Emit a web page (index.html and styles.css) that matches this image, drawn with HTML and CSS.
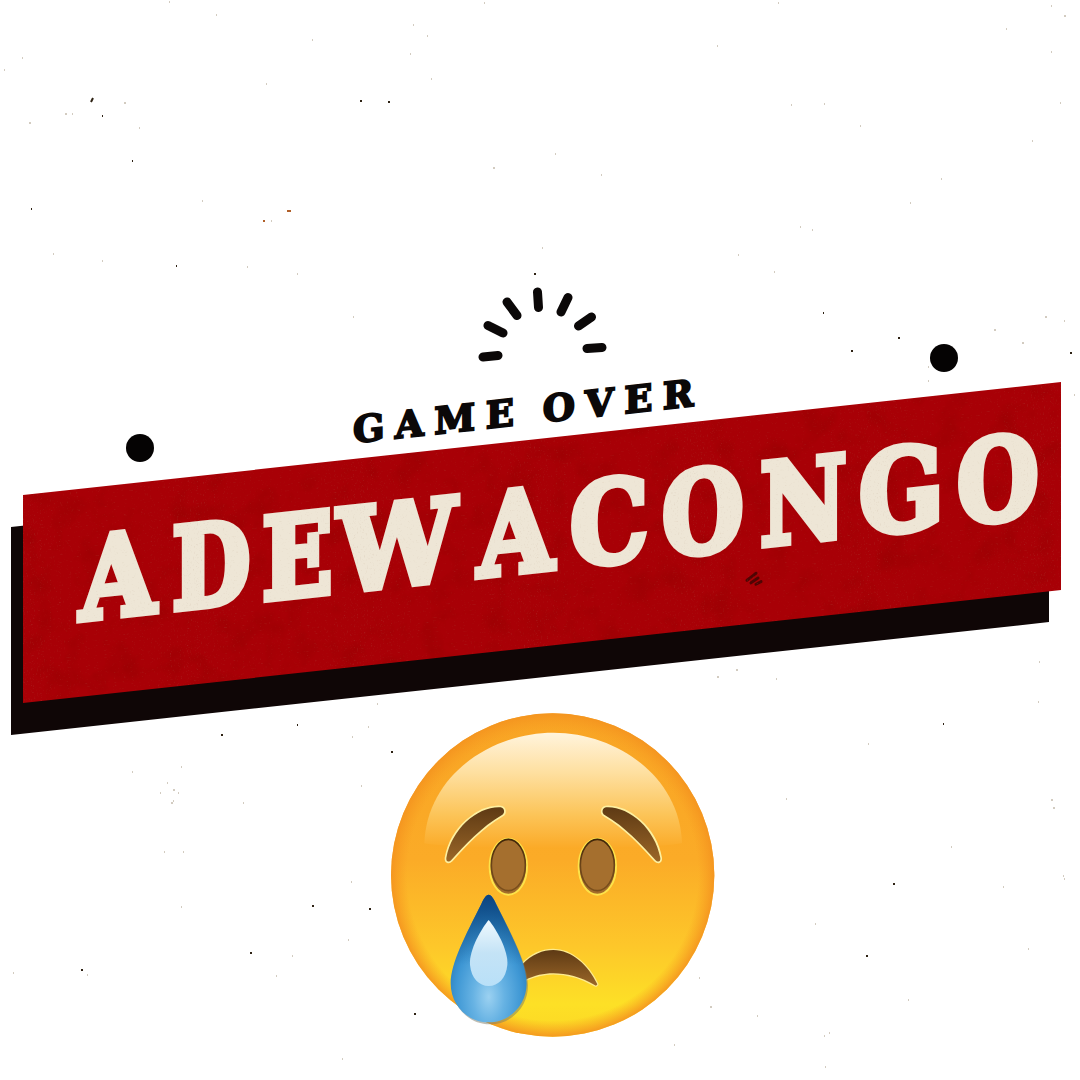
FILE: index.html
```html
<!DOCTYPE html>
<html lang="en">
<head>
<meta charset="utf-8">
<title>Game Over</title>
<link rel="stylesheet" href="styles.css">
</head>
<body>
<main class="canvas">
  <svg class="layer" viewBox="0 0 1080 1080" aria-hidden="true">
    <path class="speck" d="M169 2h1M216 15h1M413 25h1M427 36h1M410 54h1M312 40h1M484 3h1M22 58h1M4 70h1M266 84h1M431 79h1M124 103h2M65 114h2M72 114h1M29 123h2M139 128h1M202 201h1M271 221h1M53 254h1M102 261h1M247 267h1M297 274h1M493 168h2M778 3h1M1051 6h1M1064 16h2M1006 29h1M717 46h1M1051 52h1M791 105h1M824 104h1M1060 103h1M860 126h1M1032 141h1M555 154h1M601 175h1M941 179h1M910 203h1M800 227h1M812 230h1M542 248h1M738 255h1M774 272h1M1045 317h2M1064 321h1M994 330h2M1022 343h2M928 367h1M928 381h1M1074 395h1M353 317h1M377 704h1M368 727h1M352 737h1M181 767h1M132 772h1M167 783h1M173 790h2M160 793h1M178 793h1M173 801h1M171 803h2M243 803h1M361 786h1M164 852h1M183 852h1M181 907h1M351 882h1M348 940h1M292 956h1M276 976h1M87 975h1M13 973h1M342 1059h1M736 670h2M717 677h2M776 679h1M1039 662h1M1038 702h1M868 744h1M786 799h1M1051 800h2M1053 808h2M951 847h1M1003 887h1M1063 876h1M1064 879h1M815 924h1M1028 949h1M908 1000h1M710 1007h1M757 1016h1M829 1033h1M824 1036h1M825 1067h1M699 978h1M711 1007h1M674 1045h1"/>
    <path class="speck speck-dark" d="M93 98 91 102M360 101h2M388 102h2M102 116h1M132 161h1M31 209h1M176 266h1M534 274h2M823 313h1M898 338h2M851 351h2M1070 353h2M297 725h1M221 735h2M391 752h2M312 906h2M369 909h2M250 953h2M81 970h2M943 724h1M893 884h2M866 956h2M414 1014h2"/>
    <path class="speck speck-rust" d="M287 211h4M263 221h2"/>
  </svg>

  <span class="dot dot-left"></span>
  <span class="dot dot-right"></span>

  <svg class="layer rays" viewBox="0 0 1080 1080" aria-hidden="true">
    <path d="M483 357 498 355.500M488 325.500 503 333M507 302 517 315.500M537.500 292 538.500 307.500M568 297.500 561 312M591.500 317 578.500 326M602 347.500 587 348.500"/>
  </svg>

  <p class="kicker">GAME OVER</p>

  <div class="banner-shadow"></div>
  <section class="banner">
    <svg class="grain" viewBox="0 0 1038 208" preserveAspectRatio="none" aria-hidden="true">
      <defs>
        <filter id="mottle" x="0" y="0" width="100%" height="100%">
          <feTurbulence type="fractalNoise" baseFrequency=".035" numOctaves="4" seed="7"/>
          <feColorMatrix values="0 0 0 0 .28  0 0 0 0 0  0 0 0 0 0  0 0 0 2.600 -1.300"/>
        </filter>
      </defs>
      <rect class="grain-mottle" width="1038" height="208" filter="url(#mottle)"/>
      <path class="scratch" d="M724 164 730 160 733 158M728 167 735 163M733 169 738 167"/>
    </svg>
    <h1 class="name"><span class="g-a">A</span><span class="g-d">D</span><span class="g-e">E</span><span class="g-w">W</span><span class="g-a">A</span><span class="g-c">C</span><span class="g-o">O</span><span class="g-n">N</span><span class="g-g">G</span><span class="g-o">O</span></h1>
    <svg class="grain" viewBox="0 0 1038 208" preserveAspectRatio="none" aria-hidden="true">
      <defs>
        <filter id="fine" x="0" y="0" width="100%" height="100%">
          <feTurbulence type="fractalNoise" baseFrequency=".7" numOctaves="2" seed="3"/>
          <feColorMatrix values="0 0 0 0 .45  0 0 0 0 .3  0 0 0 0 .2  0 0 0 3 -1.700"/>
        </filter>
      </defs>
      <rect class="grain-fine" width="1038" height="208" filter="url(#fine)"/>
    </svg>
  </section>

  <svg class="emoji" viewBox="0 0 1050 1050" role="img" aria-label="Crying face">
    <defs>
      <linearGradient id="face" x1="0" y1="0" x2="0" y2="1">
        <stop offset="0" stop-color="#f8a424"/>
        <stop offset=".45" stop-color="#fbab27"/>
        <stop offset=".72" stop-color="#fdc72a"/>
        <stop offset=".9" stop-color="#fde026"/>
        <stop offset="1" stop-color="#fcd724"/>
      </linearGradient>
      <radialGradient id="rim" cx=".5" cy=".5" r=".5">
        <stop offset=".9" stop-color="#f79a20" stop-opacity="0"/>
        <stop offset="1" stop-color="#f4931f" stop-opacity=".9"/>
      </radialGradient>
      <linearGradient id="gloss" x1="0" y1="0" x2="0" y2="1">
        <stop offset="0" stop-color="#fff4dc"/>
        <stop offset=".35" stop-color="#fedf9f"/>
        <stop offset=".7" stop-color="#fcc55a"/>
        <stop offset="1" stop-color="#fbaa27"/>
      </linearGradient>
      <linearGradient id="brow" x1="0" y1="0" x2="0" y2="1">
        <stop offset="0" stop-color="#5e3a14"/>
        <stop offset="1" stop-color="#9a6628"/>
      </linearGradient>
      <linearGradient id="eyeEdge" x1="0" y1="0" x2="0" y2="1">
        <stop offset="0" stop-color="#3f2508"/>
        <stop offset=".5" stop-color="#6b4418"/>
        <stop offset="1" stop-color="#7a4f1c"/>
      </linearGradient>
      <radialGradient id="drop" cx=".5" cy=".8" r=".7">
        <stop offset="0" stop-color="#9bd1f1"/>
        <stop offset=".3" stop-color="#66b2e3"/>
        <stop offset=".62" stop-color="#3e97d4"/>
        <stop offset="1" stop-color="#1c6aaa"/>
      </radialGradient>
      <linearGradient id="dropTip" x1="0" y1="0" x2="0" y2="1">
        <stop offset="0" stop-color="#0c437f"/>
        <stop offset=".3" stop-color="#14568f" stop-opacity=".45"/>
        <stop offset=".55" stop-color="#14568f" stop-opacity="0"/>
      </linearGradient>
      <linearGradient id="shine" x1="0" y1="0" x2="0" y2="1">
        <stop offset="0" stop-color="#eff9fe"/>
        <stop offset=".5" stop-color="#c4e3f6"/>
        <stop offset="1" stop-color="#b9e0f8"/>
      </linearGradient>
    </defs>
    <circle cx="518" cy="525" r="485" fill="url(#face)"/>
    <circle cx="518" cy="525" r="485" fill="url(#rim)"/>
    <path d="M133 430C140 230 330 98 520 98S900 230 906 430C800 450 240 450 133 430Z" fill="url(#gloss)"/>
    <g fill="url(#brow)" stroke="#fdf0a0" stroke-width="10" stroke-linejoin="round" paint-order="stroke">
      <path d="M362 322C374 324 376 340 366 345 305 380 255 435 214 480 206 488 198 486 199 474 215 385 295 318 362 322Z"/>
      <path d="M678 322C666 324 664 340 674 345 735 380 785 435 826 480 834 488 842 486 841 474 825 385 745 318 678 322Z"/>
    </g>
    <g fill="#a36c2b" stroke="#fde34a" stroke-width="6">
      <ellipse cx="385" cy="500" rx="56" ry="84"/>
      <ellipse cx="652" cy="500" rx="56" ry="84"/>
    </g>
    <g fill="#a56f2e" stroke="url(#eyeEdge)" stroke-width="5">
      <ellipse cx="385" cy="495" rx="51" ry="77"/>
      <ellipse cx="652" cy="495" rx="51" ry="77"/>
    </g>
    <path d="M425 795C455 762 490 750 520 750 575 750 625 795 652 853L648 857C600 830 560 820 520 820 490 820 465 826 435 840Z" fill="url(#brow)" stroke="#fdeb8f" stroke-width="7" stroke-linejoin="round" paint-order="stroke"/>
    <path d="M330 590C338 591 345 601 352 618 399 711 444 796 444 856 444 921 394 973 330 973 266 973 216 921 216 856 216 796 261 711 308 618 315 601 322 591 330 590Z" fill="#7d7c68" opacity=".5"/>
    <path d="M326 584C334 585 341 595 348 612 395 705 440 790 440 850 440 915 390 967 326 967 262 967 212 915 212 850 212 790 257 705 304 612 311 595 318 585 326 584Z" fill="url(#drop)"/>
    <path d="M326 584C334 585 341 595 348 612 395 705 440 790 440 850 440 915 390 967 326 967 262 967 212 915 212 850 212 790 257 705 304 612 311 595 318 585 326 584Z" fill="url(#dropTip)"/>
    <path d="M326 660C345 682 386 750 382 795 378 835 355 858 326 858 297 858 274 835 270 795 266 750 307 682 326 660Z" fill="url(#shine)"/>
  </svg>
</main>
</body>
</html>
```
FILE: styles.css
```css
html, body {
  margin: 0;
  padding: 0;
  background: #ffffff;
}
.canvas {
  position: relative;
  width: 1080px;
  height: 1080px;
  overflow: hidden;
  background: #ffffff;
}
.layer {
  position: absolute;
  left: 0;
  top: 0;
  width: 1080px;
  height: 1080px;
}
.speck {
  fill: none;
  stroke: #8a7558;
  stroke-width: 1;
  opacity: .75;
}
.speck-dark {
  stroke: #2e2214;
  stroke-width: 2;
  opacity: 1;
}
.speck-rust {
  stroke: #b0602a;
  stroke-width: 2;
  opacity: 1;
}
.rays path {
  fill: none;
  stroke: #0b0808;
  stroke-width: 9;
  stroke-linecap: round;
}
.dot {
  position: absolute;
  width: 28px;
  height: 28px;
  border-radius: 50%;
  background: #050303;
}
.dot-left { left: 125.500px; top: 433.500px; }
.dot-right { left: 929.500px; top: 343.500px; }
.kicker {
  position: absolute;
  left: 353px;
  top: 412px;
  margin: 0;
  font: 700 37px/1 "DejaVu Serif", serif;
  letter-spacing: 10.500px;
  word-spacing: -5px;
  color: #0b0808;
  -webkit-text-stroke: 2px #0b0808;
  white-space: nowrap;
  transform-origin: 0 50%;
  transform: skewY(-6.21deg);
}
.banner-shadow {
  position: absolute;
  left: 11px;
  top: 527px;
  width: 1038px;
  height: 208px;
  background: #0f0606;
  transform-origin: 0 0;
  transform: skewY(-6.21deg);
}
.banner {
  position: absolute;
  left: 23px;
  top: 495px;
  width: 1038px;
  height: 208px;
  box-sizing: border-box;
  padding: 0 0 26px 57px;
  display: flex;
  align-items: center;
  background: #a80006;
  transform-origin: 0 0;
  transform: skewY(-6.21deg);
}
.name {
  position: relative;
  margin: 0;
  font: 700 113px/1 "DejaVu Serif", serif;
  color: #eee6d6;
  -webkit-text-stroke: 7px #eee6d6;
  white-space: nowrap;
}
.name span {
  display: inline-block;
  transform-origin: 0 50%;
}
.g-a { width: 92px; transform: scaleX(.86); }
.g-d { width: 90px; transform: scaleX(.80); }
.g-e { width: 76px; transform: scaleX(.82); }
.g-w { width: 140px; transform: scaleX(.93); }
.g-c { width: 92px; transform: scaleX(.87); }
.g-o { width: 98px; transform: scaleX(.83); }
.g-n { width: 99px; transform: scaleX(.84); }
.g-g { width: 98px; transform: scaleX(.88); }
.grain {
  position: absolute;
  left: 0;
  top: 0;
  width: 100%;
  height: 100%;
}
.grain-mottle { opacity: .4; }
.grain-fine { opacity: .2; }
.scratch {
  fill: none;
  stroke: #3a0503;
  stroke-width: 3;
  stroke-linecap: round;
  opacity: .8;
}
.emoji {
  position: absolute;
  left: 380px;
  top: 700px;
  width: 350px;
  height: 350px;
}
```
